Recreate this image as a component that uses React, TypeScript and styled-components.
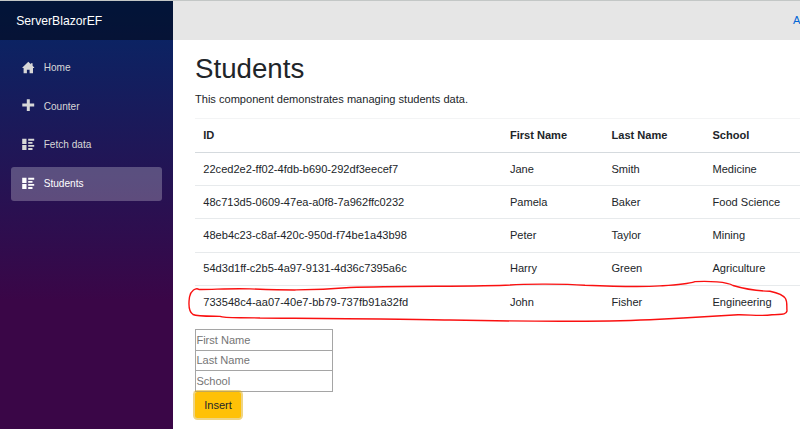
import React from 'react';
import styled, { createGlobalStyle } from 'styled-components';

const GlobalStyle = createGlobalStyle`
  *, *::before, *::after { box-sizing: border-box; }
  html, body { margin: 0; overflow: hidden; }
  body {
    background: #fff;
    color: #212529;
    font: 11.07px/16.6px "Liberation Sans", Arial, sans-serif;
  }
`;

const Page = styled.div`
  display: flex;
  width: 800px;
  height: 429px;
  border-top: 1px solid #c3c7c6;
  overflow: hidden;
`;

const Sidebar = styled.aside`
  flex: 0 0 173px;
  background: linear-gradient(180deg, #052767 0%, #3a0647 70%);
`;

const Brand = styled.div`
  display: flex;
  align-items: center;
  height: 39px;
  padding: 1px 0 0 16.2px;
  background: rgba(0, 0, 0, 0.45);
  color: #fff;
  font-size: 12.2px;
`;

const Nav = styled.nav`
  display: flex;
  flex-direction: column;
  gap: 5.6px;
  padding: 11px 11px 0 10.7px;
`;

const NavItem = styled.a<{ $active?: boolean }>`
  display: flex;
  align-items: center;
  height: 33.2px;
  padding: 1px 0 0 11px;
  border-radius: 3px;
  background: ${p => (p.$active ? 'rgba(255, 255, 255, 0.25)' : 'transparent')};
  color: ${p => (p.$active ? '#fff' : '#d7d7d7')};
  font-size: 10.1px;

  svg { width: 13px; height: 13px; margin: 0 9px 2px 0; fill: currentColor; }
`;

const Main = styled.main`
  flex: 0 0 658px;
`;

const TopRow = styled.div`
  display: flex;
  align-items: center;
  justify-content: flex-end;
  height: 39px;
  padding-right: 10px;
  background: #e6e6e6;
`;

const AboutLink = styled.a`
  width: 28px;
  color: #0366d6;
`;

const Content = styled.div`
  padding: 12px 0 0 22px;
`;

const Title = styled.h1`
  margin: 0 0 6px;
  font-size: 27.68px;
  line-height: 33.2px;
  font-weight: 400;
`;

const Intro = styled.p`
  margin: 0 0 10.2px;
`;

const Table = styled.div`
  width: 636px;
  margin-bottom: 10.8px;
`;

const Row = styled.div<{ $head?: boolean }>`
  display: grid;
  grid-template-columns: 306.6px 101.6px 101px 1fr;
  align-items: center;
  height: ${p => (p.$head ? '34px' : '33.2px')};
  padding: 0 0 0 8.3px;
  border-top: ${p => (p.$head ? '1px solid #f3f4f5' : '1px solid #e7eaec')};
  font-weight: ${p => (p.$head ? 700 : 400)};

  &:nth-child(2) { border-top-color: #d5dade; }
`;

const Form = styled.form`
  display: flex;
  flex-direction: column;
  align-items: flex-start;
`;

const Field = styled.input`
  width: 138px;
  height: 21.8px;
  margin-bottom: -1px;
  padding: 0 0.4px;
  border: 1px solid #a5a5a5;
  border-radius: 0;
  outline: 0;
  font: inherit;

  &::placeholder { color: #757575; opacity: 1; }
`;

const InsertButton = styled.button`
  width: 46px;
  height: 26px;
  margin-top: 1px;
  padding: 0;
  border: 0;
  border-radius: 2.5px;
  background: #ffc107;
  box-shadow: 0 0 0 2px rgba(222, 170, 12, 0.5);
  color: #212529;
  font: inherit;
`;

const Annotation = styled.svg`
  position: absolute;
  left: 0;
  top: 0;
  width: 800px;
  height: 429px;
  pointer-events: none;
  fill: none;
  stroke: #fa1010;
  stroke-width: 1.4;
  stroke-linejoin: round;
  stroke-linecap: round;
`;

const HomeIcon = () => (
  <svg viewBox="0 0 13 13"><path d="M6.3 .8 .4 6.4V7H1.6v5.2h3.3V8.8h2.7v3.4H11V7h1.2v-.6L10.6 4.8V2.2H8.9v1z" /></svg>
);
const PlusIcon = () => (
  <svg viewBox="0 0 13 13"><path d="M4.8.3h3v4.3h4.4v2.8H7.8v4.5h-3V7.4H.3V4.6h4.5z" /></svg>
);
const ListIcon = () => (
  <svg viewBox="0 0 13 13"><path d="M.2.8h4.3V6H.2zM.2 7h4.3v4.9H.2zM6.2.8h6v1.9h-6zM6.2 4h4.3v1.8H6.2zM6.2 7h6v1.8h-6zM6.2 10.1h4.3v1.8H6.2z" /></svg>
);

const navItems = [
  { label: 'Home', Icon: HomeIcon },
  { label: 'Counter', Icon: PlusIcon },
  { label: 'Fetch data', Icon: ListIcon },
  { label: 'Students', Icon: ListIcon, active: true },
];

const students = [
  ['22ced2e2-ff02-4fdb-b690-292df3eecef7', 'Jane', 'Smith', 'Medicine'],
  ['48c713d5-0609-47ea-a0f8-7a962ffc0232', 'Pamela', 'Baker', 'Food Science'],
  ['48eb4c23-c8af-420c-950d-f74be1a43b98', 'Peter', 'Taylor', 'Mining'],
  ['54d3d1ff-c2b5-4a97-9131-4d36c7395a6c', 'Harry', 'Green', 'Agriculture'],
  ['733548c4-aa07-40e7-bb79-737fb91a32fd', 'John', 'Fisher', 'Engineering'],
];

export default function App() {
  return (
    <>
      <GlobalStyle />
      <Page>
        <Sidebar>
          <Brand>ServerBlazorEF</Brand>
          <Nav>
            {navItems.map(({ label, Icon, active }) => (
              <NavItem key={label} $active={active}><Icon />{label}</NavItem>
            ))}
          </Nav>
        </Sidebar>
        <Main>
          <TopRow><AboutLink>About</AboutLink></TopRow>
          <Content>
            <Title>Students</Title>
            <Intro>This component demonstrates managing students data.</Intro>
            <Table>
              <Row $head>
                <span>ID</span><span>First Name</span><span>Last Name</span><span>School</span>
              </Row>
              {students.map(row => (
                <Row key={row[0]}>{row.map(cell => <span key={cell}>{cell}</span>)}</Row>
              ))}
            </Table>
            <Form>
              <Field placeholder="First Name" />
              <Field placeholder="Last Name" />
              <Field placeholder="School" />
              <InsertButton type="button">Insert</InsertButton>
            </Form>
          </Content>
        </Main>
      </Page>
      <Annotation viewBox="0 0 800 429">
        <path d="M199 289.5C196 287 190.5 291 189.5 297C188.5 304 189 312 193 314.5C197 316.5 210 316.2 220 316.4C224 318.5 240 317.3 260 318C330 318.5 400 318.8 450 320C520 321.4 610 321.4 650 319.7C680 318.3 705 316.6 738 314.8C750 314.6 760 316.3 772 314.8C780 314 786 315.5 787 311C786.5 306 787.5 302 785.5 298.5C783 294.5 776 292.5 770 291.2C758 291 743 288.5 733 285.5C727 281.8 709 280.8 695 281.6C686 284.5 675 285 660 285.9C640 287 600 285.8 585 285.2C565 283.8 525 283.7 510 285C480 286.8 400 285.7 350 287.5C310 291 280 290 250 288.9C233 288 210 289.8 199 289.5" />
      </Annotation>
    </>
  );
}
